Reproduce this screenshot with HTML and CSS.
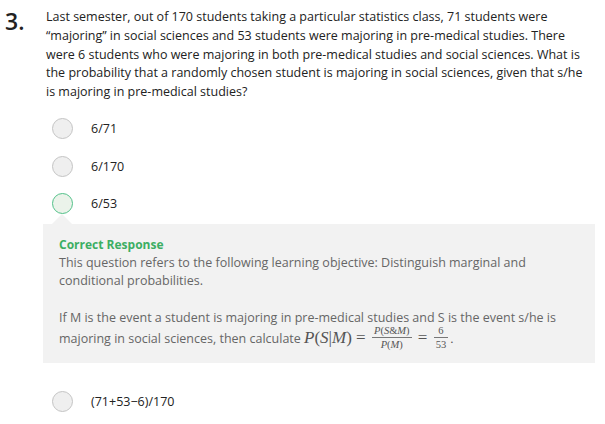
FILE: index.html
```html
<!DOCTYPE html>
<html>
<head>
<meta charset="utf-8">
<link rel="stylesheet" href="styles.css">
</head>
<body>
<div class="question">
  <div class="num">3.</div>
  <div class="content">
    <p class="stem">Last semester, out of 170 students taking a particular statistics class, 71 students were “majoring” in social sciences and 53 students were majoring in pre-medical studies. There were 6 students who were majoring in both pre-medical studies and social sciences. What is the probability that a randomly chosen student is majoring in social sciences, given that s/he is majoring in pre-medical studies?</p>
    <ul class="options first">
      <li class="option"><span class="radio"></span><span class="label">6/71</span></li>
      <li class="option"><span class="radio"></span><span class="label">6/170</span></li>
      <li class="option selected"><span class="radio"></span><span class="label">6/53</span></li>
    </ul>
    <div class="feedback">
      <div class="fb-title">Correct Response</div>
      <p class="fb-text">This question refers to the following learning objective: Distinguish marginal and conditional probabilities.</p>
      <p class="fb-text fb-second">If M is the event a student is majoring in pre-medical studies and S is the event s/he is majoring in social sciences, then calculate <span class="math"><span class="mi">P</span>(<span class="mi">S</span>|<span class="mi">M</span>) <span class="eq">=</span> <span class="frac"><span class="numr"><span class="mi">P</span>(<span class="mi">S</span>&amp;<span class="mi">M</span>)</span><span class="den"><span class="mi">P</span>(<span class="mi">M</span>)</span></span> <span class="eq">=</span> <span class="frac"><span class="numr">6</span><span class="den">53</span></span><span class="dot">.</span></span></p>
    </div>
    <ul class="options last">
      <li class="option"><span class="radio"></span><span class="label">(71+53−6)/170</span></li>
    </ul>
  </div>
</div>
</body>
</html>
```

FILE: styles.css
```css
* { box-sizing: border-box; }
body {
  margin: 0;
  background: #fff;
  font-family: "Open Sans", "Liberation Sans", sans-serif;
  color: #222;
}
.question {
  display: flex;
  padding: 8px 10px 0 5px;
}
.num {
  width: 41px;
  flex: none;
  font-size: 23px;
  line-height: 26px;
  font-weight: 600;
  color: #222;
}
.content { flex: 1; }
.stem {
  margin: 0;
  padding-right: 8px;
  font-size: 12.5px;
  line-height: 18.8px;
}
.options {
  list-style: none;
  margin: 0;
  padding: 0;
}
.options.first { margin-top: 8px; }
.option {
  display: flex;
  align-items: center;
  height: 37.5px;
  font-size: 12.5px;
  padding-left: 6px;
}
.radio {
  width: 21px;
  height: 21px;
  border-radius: 50%;
  background: #efefef;
  border: 1px solid #c4c4c4;
  margin-right: 18px;
  flex: none;
}
.selected .radio {
  background: #ebf3ea;
  border-color: #52c189;
}
.feedback {
  position: relative;
  background: #f2f2f2;
  margin-top: 2px;
  margin-left: -3px;
  padding: 12px 16px 14px 16px;
  color: #666;
  font-size: 12.5px;
  line-height: 18px;
}
.feedback::before {
  content: "";
  position: absolute;
  top: -10px;
  left: 9px;
  border-left: 10px solid transparent;
  border-right: 10px solid transparent;
  border-bottom: 10px solid #f2f2f2;
}
.fb-title {
  color: #3cae63;
  font-weight: 700;
  font-size: 12px;
  line-height: 18px;
}
.fb-text { margin: 0; }
.fb-second { margin-top: 17px; line-height: 21px; }
.math {
  font-family: "Liberation Serif", "Times New Roman", serif;
  font-size: 17px;
  line-height: 0;
  color: #555;
  white-space: nowrap;
}
.mi { font-style: italic; }
.eq { font-style: normal; }
.frac {
  display: inline-flex;
  flex-direction: column;
  vertical-align: middle;
  text-align: center;
  font-size: 10.5px;
  line-height: 11px;
  margin: -12px 2px;
  position: relative;
  top: -2px;
}
.frac .numr {
  border-bottom: 1px solid #777;
  padding: 0 2px 1px;
}
.frac .den { padding: 1px 2px 0; }
.dot { font-size: 13px; }
.options.last { margin-top: 19px; }
```
